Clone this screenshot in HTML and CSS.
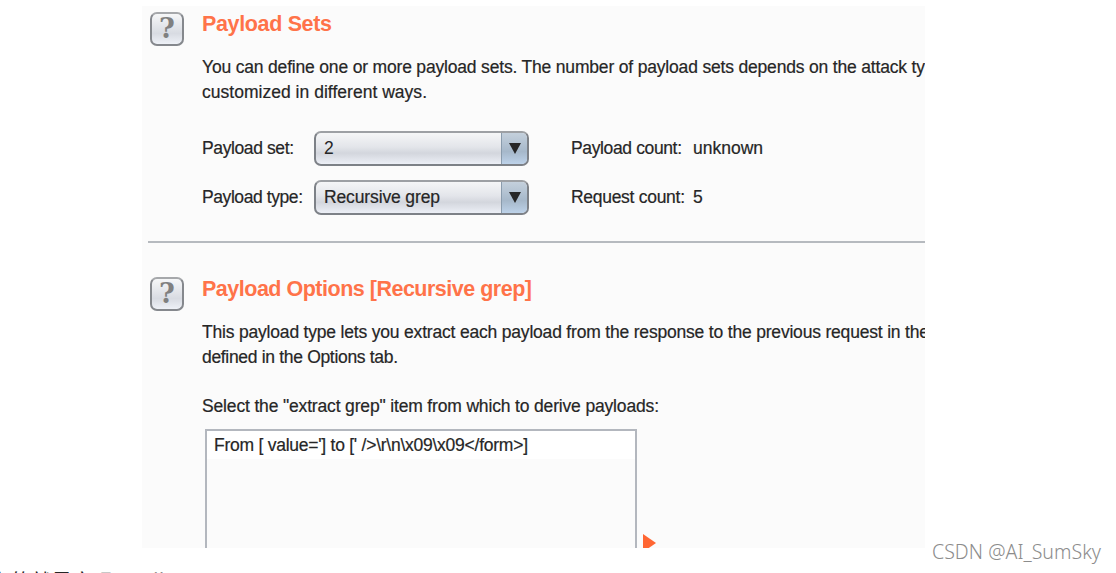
FILE: index.html
```html
<!DOCTYPE html>
<html lang="zh">
<head>
  <meta charset="UTF-8">
  <title>Payload Sets</title>
  <link rel="stylesheet" href="styles.css">
</head>
<body>
  <div class="panel">
    <section class="bloque sets">
      <div class="ayuda">?</div>
      <div class="contenido">
        <h2><svg width="131" height="28"><text x="0" y="20" textLength="130">Payload Sets</text></svg></h2>
        <p class="texto">
          <svg width="740" height="25"><text x="0" y="18" textLength="723">You can define one or more payload sets. The number of payload sets depends on the attack ty</text></svg>
          <svg width="740" height="25"><text x="0" y="18" textLength="225">customized in different ways.</text></svg>
        </p>
        <div class="campos">
          <label><svg width="112" height="34"><text x="0" y="23" textLength="92">Payload set:</text></svg></label>
          <div class="combo"><span>2</span><i>
            <svg width="25" height="32"><path d="M7 12h12l-6 11z"/></svg></i></div>
          <svg class="dato" width="200" height="34"><text x="0" y="23" textLength="111">Payload count:</text><text x="122" y="23" textLength="70">unknown</text></svg>
          <label><svg width="112" height="34"><text x="0" y="23" textLength="101">Payload type:</text></svg></label>
          <div class="combo"><span><svg width="130" height="31"><text x="0" y="21" textLength="116">Recursive grep</text></svg></span><i>
            <svg width="25" height="32"><path d="M7 12h12l-6 11z"/></svg></i></div>
          <svg class="dato" width="200" height="34"><text x="0" y="23" textLength="114">Request count:</text><text x="122" y="23">5</text></svg>
        </div>
      </div>
    </section>
    <hr>
    <section class="bloque opciones">
      <div class="ayuda">?</div>
      <div class="contenido">
        <h2><svg width="340" height="28"><text x="0" y="20" textLength="330">Payload Options [Recursive grep]</text></svg></h2>
        <p class="texto">
          <svg width="740" height="25"><text x="0" y="18" textLength="727">This payload type lets you extract each payload from the response to the previous request in the</text></svg>
          <svg width="740" height="25"><text x="0" y="18" textLength="196">defined in the Options tab.</text></svg>
        </p>
        <p class="texto elegir">
          <svg width="740" height="25"><text x="0" y="18" textLength="457">Select the "extract grep" item from which to derive payloads:</text></svg>
        </p>
        <div class="fila">
          <div class="lista">
            <div class="item"><svg width="330" height="28"><text x="0" y="20" textLength="314">From [ value='] to [' />\r\n\x09\x09&lt;/form&gt;]</text></svg></div>
          </div>
          <svg class="flecha" width="14" height="18"><path d="M0 0l13 9-13 9z"/></svg>
        </div>
      </div>
    </section>
  </div>
  <div class="marca"><svg width="175" height="30"><text x="0" y="21" textLength="169">CSDN @AI_SumSky</text></svg></div>
  <p class="pie">上的就是实现 shell</p>
</body>
</html>
```

FILE: styles.css
```css
body {
  margin: 0;
  height: 573px;
  overflow: hidden;
  position: relative;
  background: #fff;
  color: #262626;
  font: 17.5px "Liberation Sans", Arial, sans-serif;
}
svg {
  display: block;
  fill: #262626;
}
svg text {
  stroke: #262626;
  stroke-width: 0.2px;
}
.panel {
  width: 783px;
  height: 542px;
  margin: 6px 0 0 142px;
  background: #fbfbfb;
  overflow: hidden;
}
.bloque {
  display: flex;
  padding-left: 8px;
}
.sets {
  padding-top: 5px;
  height: 230px;
}
.opciones {
  padding-top: 33px;
}
.ayuda {
  flex: none;
  box-sizing: border-box;
  width: 34px;
  height: 34px;
  margin: 1px 18px 0 0;
  border: 2px solid #85888d;
  border-top-color: #a6a8ab;
  border-radius: 7px;
  background: linear-gradient(#f6f7f8, #d8dbe2 65%, #eef1f7);
  color: #808080;
  font: bold 27px/30px "DejaVu Serif", "Liberation Serif", serif;
  text-align: center;
}
.contenido {
  flex: none;
  width: 740px;
}
h2 {
  margin: 0;
  height: 44px;
  font-size: 21.5px;
}
h2 svg text {
  fill: #ff7349;
  stroke: none;
}
.texto {
  margin: 0;
}
.campos {
  display: grid;
  grid-template-columns: 112px 215px 200px;
  row-gap: 14px;
  margin-top: 26px;
}
.combo {
  box-sizing: border-box;
  display: flex;
  justify-content: space-between;
  height: 35px;
  border: 2px solid #7d8187;
  border-top-color: #9da0a4;
  border-radius: 7px;
  background: linear-gradient(#f5f6f7, #e3e5ea 45%, #d3d6dd 65%, #eceff6);
  line-height: 31px;
  overflow: hidden;
}
.combo span {
  padding-left: 8px;
}
.combo i {
  width: 25px;
  border-left: 1px solid #8a9cad;
  background: linear-gradient(#c4d0dc, #a6b8ca 60%, #bdd2e9);
}
.combo i svg {
  margin-top: -2px;
}
.dato {
  margin-left: 42px;
}
hr {
  height: 2px;
  margin: 0 0 0 6px;
  border: 0;
  background: #b6babf;
}
.elegir {
  margin-top: 24px;
}
.fila {
  display: flex;
  align-items: flex-end;
  margin: 10px 0 0 3px;
  height: 122px;
}
.lista {
  box-sizing: border-box;
  width: 432px;
  height: 122px;
  border: 2px solid #b3b7be;
  border-bottom: 0;
}
.item {
  height: 28px;
  padding-left: 7px;
  background: #fff;
}
.flecha {
  margin: 0 0 -1px 6px;
}
.flecha path {
  fill: #ff6633;
}
/* sello de agua sobre la esquina */
.marca {
  position: absolute;
  left: 932px;
  top: 538px;
  font: 300 19.5px "Noto Sans", sans-serif;
}
.marca text {
  fill: #8c8c8c;
  stroke: none;
}
.pie {
  margin: 17px 0 0 -10px;
  font: 20.5px/30px "Noto Sans CJK SC", sans-serif;
  word-spacing: 2px;
  white-space: nowrap;
}
```
